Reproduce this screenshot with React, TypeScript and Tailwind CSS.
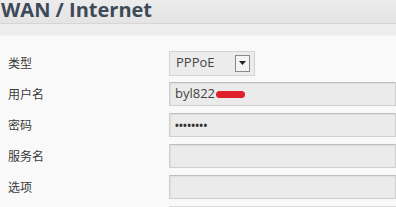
const rows = [
  { label: '类型', kind: 'select' },
  { label: '用户名', kind: 'user' },
  { label: '密码', kind: 'pass' },
  { label: '服务名', kind: 'empty' },
  { label: '选项', kind: 'empty' },
];

const field =
  'h-[24px] w-full border border-[#cfcfcf] border-t-[#bdbdbd] bg-[#ebebeb] shadow-[inset_1px_1px_1px_rgba(0,0,0,0.06)] flex items-center pl-[5px]';

export default function App() {
  return (
    <div
      className="w-[396px] h-[207px] overflow-hidden bg-[#f9f9f9] text-[#333]"
      style={{ fontFamily: '"Open Sans", "Noto Sans CJK SC", sans-serif' }}
    >
      {/* Title bar */}
      <div className="h-[24px] bg-gradient-to-b from-[#ececec] to-[#e4e4e4] border-b border-[#d6d6d6] flex items-start">
        <h1 className="pl-[1px] text-[20px] font-bold leading-[20px] text-[#3e4a58]">WAN / Internet</h1>
      </div>
      <div className="h-[12px] bg-[#ededed] border-b border-[#f2f2f2]" />

      {/* Form */}
      <div className="pt-[15px] flex flex-col gap-[7px]">
        {rows.map((r, i) => (
          <div key={i} className="flex items-center h-[24px]">
            <span className="w-[169px] pl-[8px] pt-[2px] text-[12px] text-[#3a3a3a]">{r.label}</span>
            <div className="flex-1">
              {r.kind === 'select' ? (
                <div className="h-[25px] w-[86px] border border-[#d2d2d2] bg-[#ececec] flex items-center pl-[6px] pr-[4px] justify-between">
                  <span className="text-[13px] text-[#444]">PPPoE</span>
                  <span className="w-[15px] h-[17px] border border-[#8a8a8a] bg-[#f4f4f4] flex items-center justify-center">
                    <svg width="7" height="4" viewBox="0 0 7 4">
                      <path d="M0 0h7L3.5 4z" fill="#222" />
                    </svg>
                  </span>
                </div>
              ) : r.kind === 'user' ? (
                <div className={field}>
                  <span className="text-[13px] text-[#444]">byl822</span>
                  <span className="ml-[1px] h-[7px] w-[29px] rounded-full bg-[#e0202a]" />
                </div>
              ) : r.kind === 'pass' ? (
                <div className={field}>
                  <span className="text-[10px] tracking-[0.3px] text-[#333] font-bold">••••••••</span>
                </div>
              ) : (
                <div className={field} />
              )}
            </div>
          </div>
        ))}
        <div className="flex h-[24px]">
          <span className="w-[169px]" />
          <div className="flex-1 border-t border-[#dcdcdc] bg-[#f3f3f3]" />
        </div>
      </div>
    </div>
  );
}
